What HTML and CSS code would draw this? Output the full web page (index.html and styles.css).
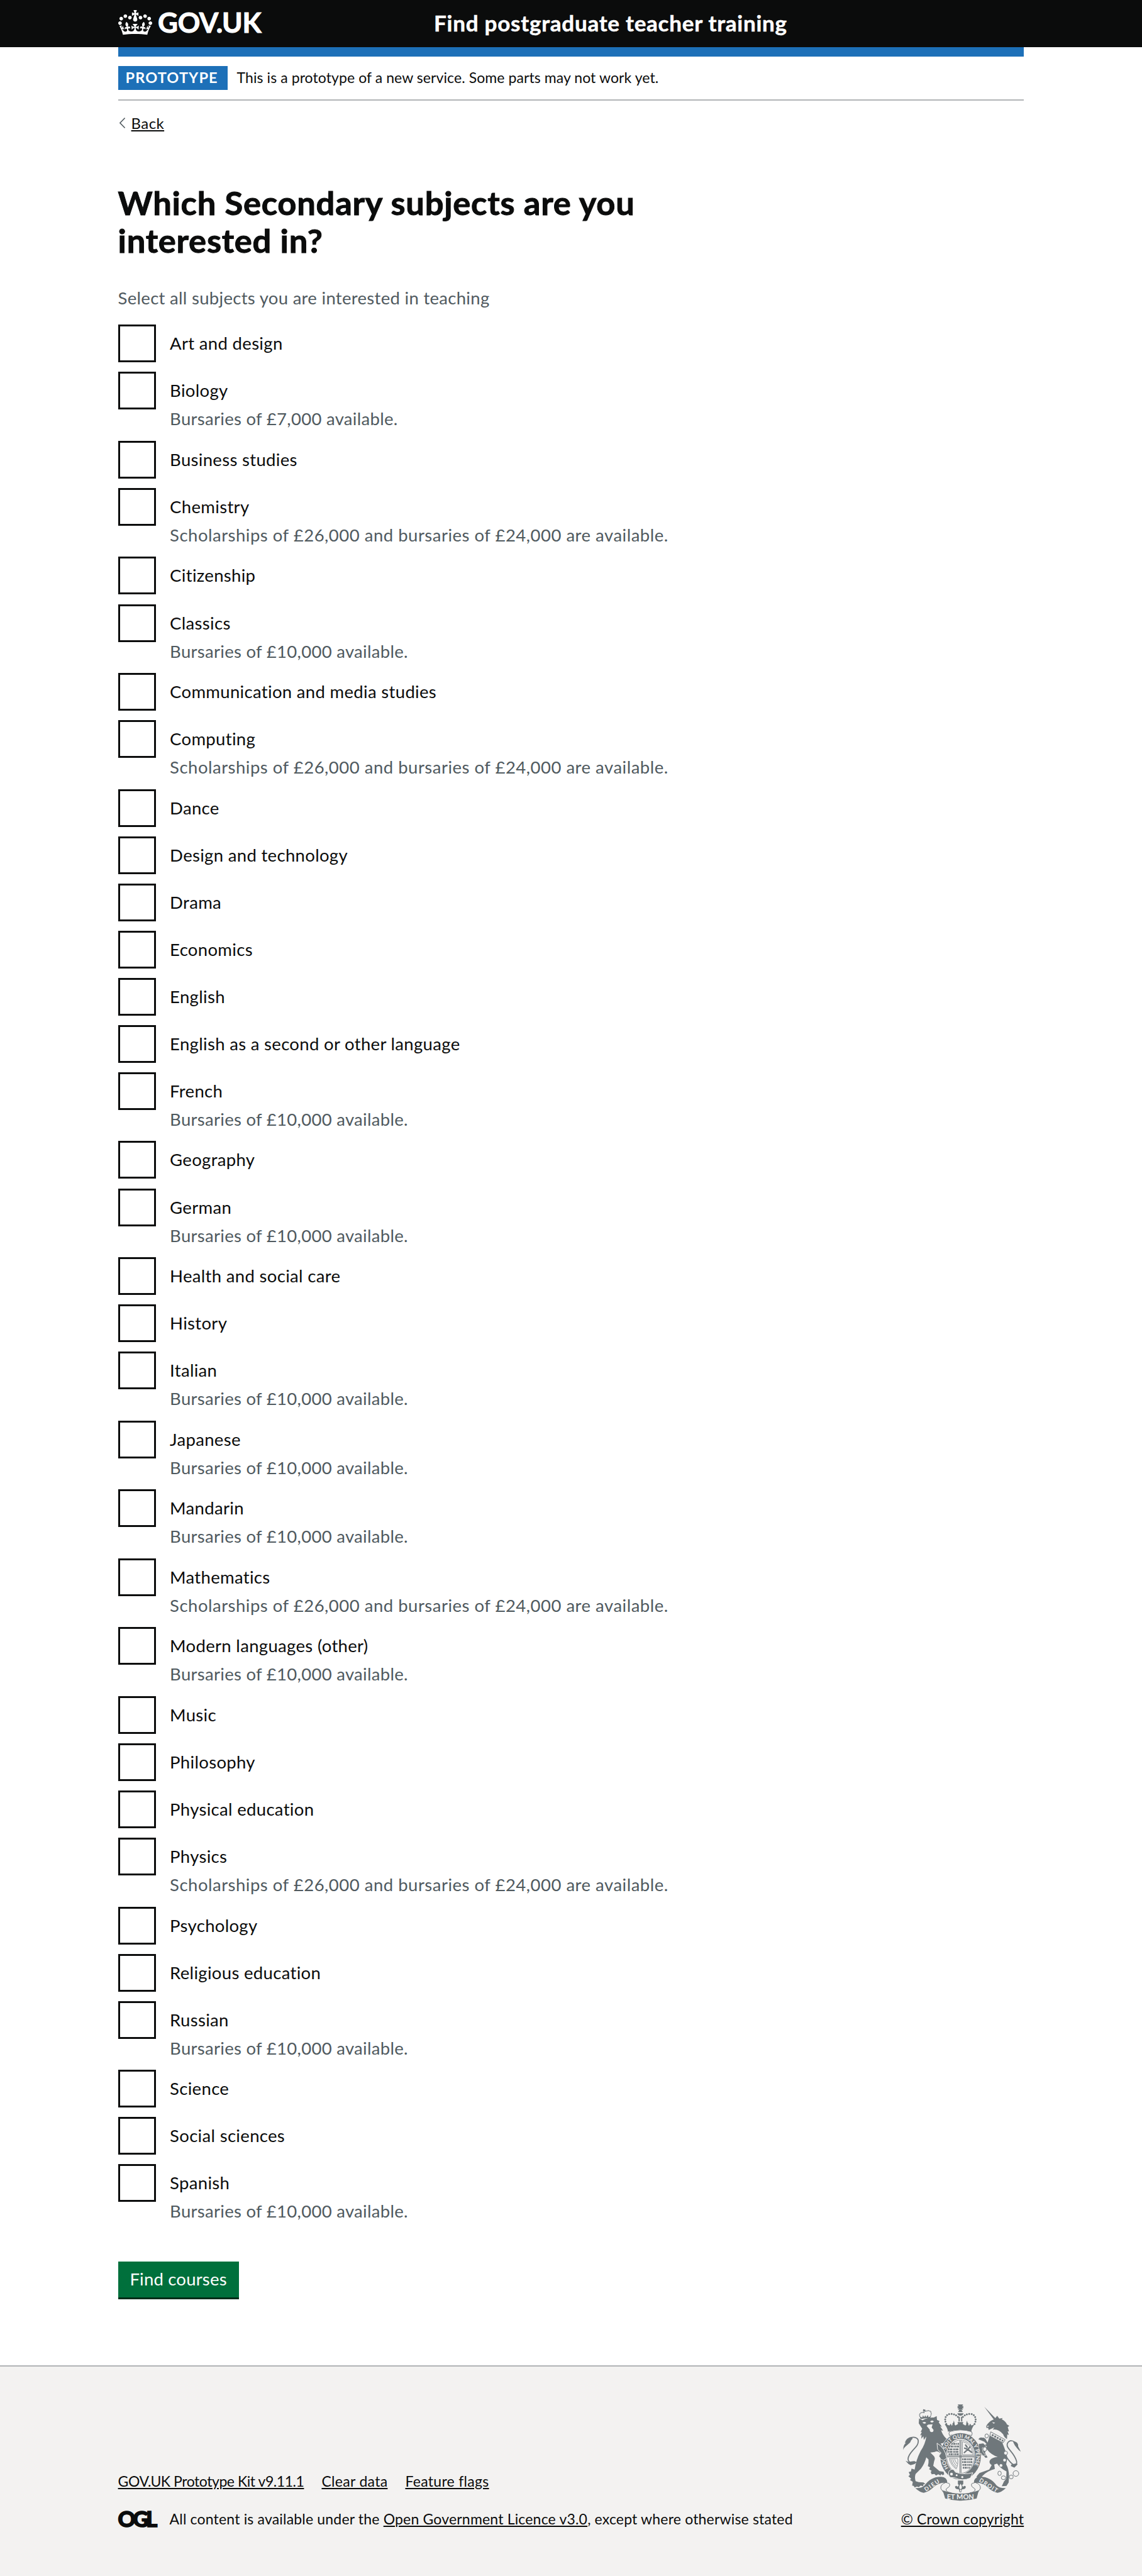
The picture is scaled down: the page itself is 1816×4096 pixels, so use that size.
FILE: index.html
```html
<!DOCTYPE html>
<html lang="en">
<head>
<meta charset="utf-8">
<title>Which Secondary subjects are you interested in? - Find postgraduate teacher training</title>
<link rel="stylesheet" href="styles.css">
</head>
<body>
<header class="header">
  <div class="container header-row">
    <a class="logo" href="#">
      <svg class="logo-crown" viewBox="0 0 132 97" aria-hidden="true"><path fill="currentColor" fill-rule="evenodd" d="M25 30.2c3.5 1.5 7.7-.2 9.1-3.7 1.5-3.6-.2-7.8-3.9-9.2-3.6-1.4-7.6.3-9.1 3.9-1.4 3.5.3 7.5 3.9 9zM9 39.5c3.6 1.5 7.8-.2 9.2-3.7 1.5-3.6-.2-7.8-3.9-9.1-3.6-1.5-7.6.2-9.1 3.8-1.4 3.5.3 7.5 3.8 9zM4.4 57.2c3.5 1.5 7.7-.2 9.1-3.8 1.5-3.6-.2-7.7-3.9-9.1-3.5-1.5-7.6.3-9.1 3.8-1.4 3.5.3 7.6 3.9 9.1zm38.3-21.4c3.5 1.5 7.7-.2 9.1-3.8 1.5-3.6-.2-7.7-3.9-9.1-3.6-1.5-7.6.3-9.1 3.8-1.3 3.6.4 7.7 3.9 9.1zm64.4-5.6c-3.6 1.5-7.8-.2-9.1-3.7-1.5-3.6.2-7.8 3.8-9.2 3.6-1.4 7.7.3 9.2 3.9 1.3 3.5-.4 7.5-3.9 9zm15.9 9.3c-3.6 1.5-7.7-.2-9.1-3.7-1.5-3.6.2-7.8 3.7-9.1 3.6-1.5 7.7.2 9.2 3.8 1.5 3.5-.3 7.5-3.8 9zm4.7 17.7c-3.6 1.5-7.8-.2-9.2-3.8-1.5-3.6.2-7.7 3.9-9.1 3.6-1.5 7.7.3 9.2 3.8 1.3 3.5-.4 7.6-3.9 9.1zM89.3 35.8c-3.6 1.5-7.8-.2-9.2-3.8-1.4-3.6.2-7.7 3.9-9.1 3.6-1.5 7.7.3 9.2 3.8 1.4 3.6-.3 7.7-3.9 9.1zM69.7 17.7l8.9 4.7V9.3l-8.9 2.8c-.2-.3-.5-.6-.9-.9L72.4 0H59.6l3.5 11.2c-.3.3-.6.5-.9.9l-8.8-2.8v13.1l8.8-4.7c.3.3.6.7.9.9l-5 15.4v.1c-.2.8-.4 1.6-.4 2.4 0 4.1 3.1 7.5 7 8.1h.2c.3 0 .7.1 1 .1.4 0 .7 0 1-.1h.2c4-.6 7.1-4.1 7.1-8.1 0-.8-.1-1.7-.4-2.4V34l-5.1-15.4c.4-.2.7-.6 1-.9zM66 92.8c16.9 0 32.8 1.1 47.1 3.2 4-16.9 8.9-26.7 14-33.5l-9.6-3.4c1 4.9 1.1 7.2 0 10.2-1.5-1.4-3-4.3-4.2-8.7L108.6 76c2.8-2 5-3.2 7.5-3.3-4.4 9.4-10 11.9-13.6 11.2-4.3-.8-6.3-4.6-5.6-7.9 1-4.7 5.7-5.9 8-.5 4.3-8.7-3-11.4-7.6-8.8 7.1-7.2 7.9-13.5 2.1-21.1-8 6.1-8.1 12.3-4.5 20.8-4.7-5.4-12.1-2.5-9.5 6.2 3.4-5.2 7.9-2 7.2 3.1-.6 4.3-6.4 7.8-13.5 7.2-10.3-.9-10.9-8-11.2-13.8 2.5-.5 7.1 1.8 11 7.3L80.2 60c-4.1 4.4-8 5.3-12.3 5.4 1.4-4.4 8-11.6 8-11.6H55.5s6.4 7.2 7.9 11.6c-4.2-.1-8-1-12.3-5.4l1.4 16.4c3.9-5.5 8.5-7.7 10.9-7.3-.3 5.8-.9 12.8-11.1 13.8-7.2.6-12.9-2.9-13.5-7.2-.7-5 3.8-8.3 7.1-3.1 2.7-8.7-4.6-11.6-9.4-6.2 3.7-8.5 3.6-14.7-4.6-20.8-5.8 7.6-5 13.9 2.2 21.1-4.7-2.6-11.9.1-7.7 8.8 2.3-5.5 7.1-4.2 8.1.5.7 3.3-1.3 7.1-5.7 7.9-3.5.7-9-1.8-13.5-11.2 2.5.1 4.7 1.3 7.5 3.3l-4.7-15.4c-1.2 4.4-2.7 7.2-4.3 8.7-1.1-3-.9-5.3 0-10.2l-9.5 3.4c5 6.9 9.9 16.7 14 33.5 14.8-2.1 30.8-3.2 47.7-3.2z"/></svg>
      <span class="logo-text">GOV.UK</span>
    </a>
    <a class="service-name" href="#">Find postgraduate teacher training</a>
  </div>
</header>
<div class="container">
  <div class="header-bar"></div>
  <div class="phase-banner">
    <strong class="tag">PROTOTYPE</strong>
    <span class="phase-text">This is a prototype of a new service. Some parts may not work yet.</span>
  </div>
  <div class="back">
    <svg class="back-arrow" viewBox="0 0 9 17" aria-hidden="true"><path d="M8.6.6.9 8.5l7.7 7.9" fill="none" stroke="currentColor" stroke-width="1.5"/></svg>
    <a class="back-link" href="#">Back</a>
  </div>
  <main class="main">
    <h1 class="heading">Which Secondary subjects are you interested in?</h1>
    <p class="hint">Select all subjects you are interested in teaching</p>
    <form>
      <div class="checkboxes">
        <div class="item"><input type="checkbox" class="box" id="s1"><div><label class="label" for="s1">Art and design</label></div></div>
        <div class="item"><input type="checkbox" class="box" id="s2"><div><label class="label" for="s2">Biology</label><p class="award">Bursaries of £7,000 available.</p></div></div>
        <div class="item"><input type="checkbox" class="box" id="s3"><div><label class="label" for="s3">Business studies</label></div></div>
        <div class="item"><input type="checkbox" class="box" id="s4"><div><label class="label" for="s4">Chemistry</label><p class="award scholarship">Scholarships of £26,000 and bursaries of £24,000 are available.</p></div></div>
        <div class="item"><input type="checkbox" class="box" id="s5"><div><label class="label" for="s5">Citizenship</label></div></div>
        <div class="item"><input type="checkbox" class="box" id="s6"><div><label class="label" for="s6">Classics</label><p class="award">Bursaries of £10,000 available.</p></div></div>
        <div class="item"><input type="checkbox" class="box" id="s7"><div><label class="label" for="s7">Communication and media studies</label></div></div>
        <div class="item"><input type="checkbox" class="box" id="s8"><div><label class="label" for="s8">Computing</label><p class="award scholarship">Scholarships of £26,000 and bursaries of £24,000 are available.</p></div></div>
        <div class="item"><input type="checkbox" class="box" id="s9"><div><label class="label" for="s9">Dance</label></div></div>
        <div class="item"><input type="checkbox" class="box" id="s10"><div><label class="label" for="s10">Design and technology</label></div></div>
        <div class="item"><input type="checkbox" class="box" id="s11"><div><label class="label" for="s11">Drama</label></div></div>
        <div class="item"><input type="checkbox" class="box" id="s12"><div><label class="label" for="s12">Economics</label></div></div>
        <div class="item"><input type="checkbox" class="box" id="s13"><div><label class="label" for="s13">English</label></div></div>
        <div class="item"><input type="checkbox" class="box" id="s14"><div><label class="label" for="s14">English as a second or other language</label></div></div>
        <div class="item"><input type="checkbox" class="box" id="s15"><div><label class="label" for="s15">French</label><p class="award">Bursaries of £10,000 available.</p></div></div>
        <div class="item"><input type="checkbox" class="box" id="s16"><div><label class="label" for="s16">Geography</label></div></div>
        <div class="item"><input type="checkbox" class="box" id="s17"><div><label class="label" for="s17">German</label><p class="award">Bursaries of £10,000 available.</p></div></div>
        <div class="item"><input type="checkbox" class="box" id="s18"><div><label class="label" for="s18">Health and social care</label></div></div>
        <div class="item"><input type="checkbox" class="box" id="s19"><div><label class="label" for="s19">History</label></div></div>
        <div class="item"><input type="checkbox" class="box" id="s20"><div><label class="label" for="s20">Italian</label><p class="award">Bursaries of £10,000 available.</p></div></div>
        <div class="item"><input type="checkbox" class="box" id="s21"><div><label class="label" for="s21">Japanese</label><p class="award">Bursaries of £10,000 available.</p></div></div>
        <div class="item"><input type="checkbox" class="box" id="s22"><div><label class="label" for="s22">Mandarin</label><p class="award">Bursaries of £10,000 available.</p></div></div>
        <div class="item"><input type="checkbox" class="box" id="s23"><div><label class="label" for="s23">Mathematics</label><p class="award scholarship">Scholarships of £26,000 and bursaries of £24,000 are available.</p></div></div>
        <div class="item"><input type="checkbox" class="box" id="s24"><div><label class="label" for="s24">Modern languages (other)</label><p class="award">Bursaries of £10,000 available.</p></div></div>
        <div class="item"><input type="checkbox" class="box" id="s25"><div><label class="label" for="s25">Music</label></div></div>
        <div class="item"><input type="checkbox" class="box" id="s26"><div><label class="label" for="s26">Philosophy</label></div></div>
        <div class="item"><input type="checkbox" class="box" id="s27"><div><label class="label" for="s27">Physical education</label></div></div>
        <div class="item"><input type="checkbox" class="box" id="s28"><div><label class="label" for="s28">Physics</label><p class="award scholarship">Scholarships of £26,000 and bursaries of £24,000 are available.</p></div></div>
        <div class="item"><input type="checkbox" class="box" id="s29"><div><label class="label" for="s29">Psychology</label></div></div>
        <div class="item"><input type="checkbox" class="box" id="s30"><div><label class="label" for="s30">Religious education</label></div></div>
        <div class="item"><input type="checkbox" class="box" id="s31"><div><label class="label" for="s31">Russian</label><p class="award">Bursaries of £10,000 available.</p></div></div>
        <div class="item"><input type="checkbox" class="box" id="s32"><div><label class="label" for="s32">Science</label></div></div>
        <div class="item"><input type="checkbox" class="box" id="s33"><div><label class="label" for="s33">Social sciences</label></div></div>
        <div class="item"><input type="checkbox" class="box" id="s34"><div><label class="label" for="s34">Spanish</label><p class="award">Bursaries of £10,000 available.</p></div></div>
      </div>
      <button class="button" type="button">Find courses</button>
    </form>
  </main>
</div>
<footer class="footer">
  <div class="container footer-row">
    <div class="footer-main">
      <nav class="footer-links">
        <a class="kit-link" href="#">GOV.UK Prototype Kit v9.11.1</a>
        <a href="#">Clear data</a>
        <a href="#">Feature flags</a>
      </nav>
      <div class="licence">
        <span class="ogl">OGL</span>
        <span>All content is available under the <a href="#">Open Government Licence v3.0</a>, except where otherwise stated</span>
      </div>
    </div>
    <div class="copyright">
      <svg class="crest" viewBox="102 101 750 615" aria-hidden="true">
        <defs>
          <path id="garter" d="M369 432A99 118 0 0 1 468 314A99 118 0 0 1 567 432A99 118 0 0 1 468 550"/>
          <path id="garter-low" d="M396 513A99 118 0 0 1 369 432"/>
          <path id="pearls" d="M377 226C360 190 376 162 406 162C428 163 442 171 452 182"/>
        </defs>
        <g fill="currentColor">
          <!-- crown -->
          <path d="M450 102h34l-7 13 8-5v18l-8-5 6 12h-32l6-12-8 5v-18l8 5zM452 150l8-14h14l8 14zM447 158h40q-3 14-20 16q-17-2-20-16zM455 180h8v30h-8zM471 180h8v30h-8z"/>
          <path d="M377 228l20 8 8-12 8 14q6-10 3-16 8-2 8-18 6 12 6 18-2 8 5 14l17-10-3-12h36l-3 12 17 10q7-6 5-14 0-6 6-18 0 16 8 18-3 6 3 16l8-14 8 12 20-8q-18 24-21 47-74-22-148 0-3-23-21-47z"/>
          <path d="M398 275q70-22 140 0 8 12 0 25-70-28-140 0-8-13 0-25z" fill="#f3f2f1" stroke="currentColor" stroke-width="4"/>
          <!-- lion -->
          <path d="M202 222l2-31 22 12q32-20 72-18l18-9 2 24 17 8-6 8 20 28-11-3 19 28-13-3q10 30 30 50l6 4-10 16q-10 14-28 14l22 42q14 20 14 42l-12 12-10 8-2-14-14 4 4-16-12-4 8-12q-20-20-36-8l-28 4 20 20q14 14 4 34l-6 30 40 34 26 4 4 16-10 6-8-8-6 10-14-8-14 8-10-10-18 2-6-14 6-8-16-10 6-12-14-8q6-20 4-42l-14-14q-10 40-34 72l-34 34q-8 20 0 46l20 6 30 2 12 10-12 2-2 12-16-4-12 10-12-4-14 6-6-10-10-2 4-24-18-12 8-8-18-16 10-8-8-18 14-4 4-18 20 6q8-60 38-118 30-44 36-92l-16 22-2-24-14 16 2-26-10 6 12-24-8 2 10-22z"/>
          <path d="M225 216q20-8 24 4-14 10-24-4zM274 210q14-12 24 0-12 14-24 0zM252 238l10-8 28-2-6 20 12 16q0 14-12 14-14-2-12-16l-10-12z" fill="#f3f2f1"/>
          <path d="M214 195l-4-16 14 6 5-14 7 12 8-12 6 12 9-14 5 14 14-6-3 12q-32-2-61 6zM231 132l14 4-1 10-5-2-2 14-5-2 1-12-5-2z"/>
          <path d="M103 392q0-34 18-46l-8 0q10-34 44-38l6 12q-12 8-16 24-18 16-30 26-12 10-14 22zM118 460l20 8q20-6 36-6l16 8-18 12-22 6-14-8z"/>
          <!-- unicorn -->
          <path d="M619 117l78 80-14 6zM683 196l18-22 13 18 22-4-6 8q26 14 32 32l16 10-10 8 8 28-9-2 8 24-10-4-2 30q-18-10-24-30-30-36-66-30l10-14-18 8-18 8-4-14-10 2-2-14q20-30 42-38z"/>
          <path d="M654 296l78 46q26 60 34 100l-8 40q18 34 18 74l-2 42-14 22-30 2 14-30 14-18 2-46q-40-20-60-50l-18 6 4 28q-50 14-76 42l-12 14-30-2 6-12 14-16 62-22 16-28q-20-14-12-30 12-20 50-22-44-16-68-48l-8-4q-6 22-2 32l14 22-12 4-16-16-14-2 6-12q-20-22-16-46l22-4 24-8-16-16-10-4-26-10q8-22 44-4l14 24z"/>
        </g>
        <g fill="none" stroke="currentColor">
          <use href="#pearls" stroke-width="12" stroke-linecap="round" stroke-dasharray="0 15"/>
          <use href="#pearls" transform="matrix(-1 0 0 1 934 0)" stroke-width="12" stroke-linecap="round" stroke-dasharray="0 15"/>
          <path stroke-width="7" stroke-linecap="round" stroke-dasharray="0 9" d="M213 186C200 166 210 150 236 152M277 176C288 154 278 132 244 146"/>
          <path stroke-width="7" d="M178 476C138 478 124 456 142 424C164 384 200 370 199 334C197 310 168 306 150 316M760 436C796 492 830 506 824 462C806 400 754 382 766 350C778 326 806 328 820 352"/>
          <path fill="currentColor" stroke="none" d="M806 336q30 4 28 32l17 34q-14-8-24-22l-14-18-10-20zM790 484l36-8 4 8-20 20-22-10z"/>
          <path stroke="#f3f2f1" stroke-width="9" d="M650 290L744 346"/>
          <path fill="#f3f2f1" stroke-width="4" d="M660 276l92 50-14 20-84-44z"/>
          <path stroke-width="12" stroke-dasharray="12 6" d="M667 295l72 39"/>
          <!-- garter and shield -->
          <ellipse cx="468" cy="432" rx="132" ry="152" fill="#f3f2f1" stroke="none"/>
          <ellipse cx="468" cy="432" rx="111" ry="130" stroke-width="36"/>
          <ellipse cx="468" cy="434" rx="88" ry="106" stroke-width="3"/>
          <path stroke-width="4" d="M464 330v210M471 330v210M381 429h176M381 436h176"/>
          <path stroke-width="11" stroke-dasharray="9 3 14 4 6 3" d="M410 352h48M394 369h64M388 387h70M388 403h70M392 418h64M478 450h66M478 468h66M480 486h58M482 504h46"/>
          <path stroke-width="3" d="M396 446h54q4 40-10 66-32-22-44-66zM406 450q6 28 32 54M418 450q4 20 24 44M430 450q4 14 16 30M480 422v-84q56 10 68 84z"/>
          <path stroke-width="9" stroke-linecap="round" d="M492 408l22-20 24 18M494 380l20 8 14-16M500 360l10 14"/>
          <path fill="currentColor" stroke="#f3f2f1" stroke-width="4" d="M318 348q52 30 62 96l-22 14-16-8-12-20 14-20-22-22z"/>
          <path fill="currentColor" stroke="#f3f2f1" stroke-width="4" d="M392 530q14-22 34-12l8 14q50 20 112 4l-16 34q-52 22-100-2l-26-2q-16-12-12-36z"/>
          <path fill="currentColor" stroke="#f3f2f1" stroke-width="3" d="M582 352l30-4 22 22-28 8 4 26 18 22-14 4-18-18-12-2 6-12q-12-24-8-46z"/>
          <!-- chain -->
          <g stroke-width="4"><ellipse cx="634" cy="302" rx="11" ry="13"/><circle cx="613" cy="324" r="9"/><ellipse cx="622" cy="386" rx="12" ry="14" fill="#f3f2f1"/><circle cx="755" cy="411" r="12" fill="#f3f2f1"/><ellipse cx="716" cy="540" rx="11" ry="14"/><ellipse cx="741" cy="568" rx="14" ry="12"/><ellipse cx="790" cy="563" rx="13" ry="12"/><circle cx="820" cy="541" r="18"/></g>
        </g>
        <g fill="#f3f2f1"><circle cx="410" cy="545" r="9"/><circle cx="443" cy="552" r="6"/><circle cx="479" cy="564" r="7"/><circle cx="748" cy="456" r="9"/><circle cx="725" cy="490" r="9"/><path d="M630 228q-2 12 20 10l-10 8zM668 214l20 4-10 6z"/></g>
        <!-- ribbon -->
        <g fill="currentColor">
          <path d="M180 634q40 2 60-18 40-56 104-54 40 2 40 40l-24-2q-30 2-60 24-30 32-66 40-24-2-54-30zM756 634q-40 2-60-18-40-56-104-54-40 2-40 40l24-2q30 2 60 24 30 32 66 40 24-2 54-30z"/>
          <path d="M354 648q114 42 230 0l-14 52q-100 28-200 0z"/>
          <path d="M451 586h34v22l-8 8 8 10q8-10 16-2 2 12-10 16l-14 2-4 18h-12l-4-18-14-2q-12-4-10-16 8-8 16 2l8-10-6-8z"/>
        </g>
        <path d="M468 606q-14 20-4 34h8q10-14-4-34zM464 644h8v12h-8z" fill="#f3f2f1"/>
        <path d="M384 602q22 0 12 22l-20 16q-4 20 34 24M370 600q-30 10-28 36l16 24M552 602q-22 0-12 22l20 16q4 20-34 24M566 600q30 10 28 36l-16 24" fill="none" stroke="currentColor" stroke-width="4"/>
        <g class="motto">
          <text font-size="33"><textPath href="#garter" startOffset="42">SOIT QUI MAL Y PENSE</textPath></text>
          <text font-size="33"><textPath href="#garter-low" startOffset="8">HO</textPath></text>
          <text font-size="36" transform="translate(248 656) rotate(-34)" textLength="106">DIEU</text>
          <text font-size="36" transform="translate(583 590) rotate(33)" textLength="132">DROIT</text>
          <text font-size="44" x="381" y="704" textLength="172">ET MON</text>
        </g>
      </svg>
      <a class="copyright-link" href="#">© Crown copyright</a>
    </div>
  </div>
</footer>
</body>
</html>
```
FILE: styles.css
```css
* { box-sizing: border-box; }

body {
  margin: 0;
  min-height: 4096px;
  display: flex;
  flex-direction: column;
  background: #fff;
  color: #0b0c0c;
  font-family: Lato, "Liberation Sans", sans-serif;
}

a {
  color: inherit;
  text-decoration-thickness: 1.5px;
  text-underline-offset: 2px;
}

.container {
  width: 1440.6px;
  margin: 0 auto 0 187.6px;
}

.header {
  height: 75px;
  background: #0b0c0c;
  color: #fff;
}

.header-row { display: flex; height: 75px; }

.header a { text-decoration: none; }

.logo {
  display: flex;
  flex: 0 0 502.5px;
}

.logo-crown {
  width: 54px;
  height: 39.7px;
  margin: 16px 9.5px 0 0;
}

.logo-text {
  font-size: 44px;
  line-height: 71px;
  font-weight: 700;
  letter-spacing: -0.4px;
  -webkit-text-stroke: 1px currentColor;
}

.service-name {
  font-size: 35px;
  line-height: 72px;
  font-weight: 700;
  letter-spacing: 0.75px;
  -webkit-text-stroke: 0.5px currentColor;
}

.header-bar { height: 15px; background: #1d70b8; }

.phase-banner {
  display: flex;
  gap: 15px;
  padding: 15px 0;
  border-bottom: 2px solid #b1b4b6;
}

.tag {
  width: 174px;
  height: 37.5px;
  padding-left: 12px;
  background: #1d70b8;
  color: #fff;
  font-size: 23.5px;
  line-height: 36px;
  letter-spacing: 1.1px;
}

.phase-text {
  font-size: 23px;
  line-height: 36px;
  letter-spacing: 0.08px;
}

.back {
  display: flex;
  align-items: center;
  height: 36px;
  margin-top: 18px;
  padding-left: 2px;
}

.back-arrow { width: 9px; height: 17px; color: #505a5f; }

.back-link {
  margin-left: 10px;
  font-size: 24px;
  line-height: 36px;
  letter-spacing: 0.4px;
}

.main { padding-top: 78.6px; }

.heading {
  width: 960px;
  margin: 0 0 43px;
  font-size: 52.5px;
  line-height: 60px;
  font-weight: 700;
  letter-spacing: 0.75px;
  -webkit-text-stroke: 1px currentColor;
}

.hint,
.award {
  margin: 0;
  color: #505a5f;
  font-size: 27.5px;
  line-height: 37.5px;
  letter-spacing: 0.3px;
}

.hint { margin-bottom: 23.7px; }

.checkboxes {
  display: flex;
  flex-direction: column;
  gap: 15.05px;
}

.item { display: flex; gap: 22.5px; }

.box {
  appearance: none;
  flex: none;
  width: 60px;
  height: 60px;
  margin: 0;
  border: 3px solid #0b0c0c;
  border-radius: 0;
  background: #fff;
}

.label {
  display: block;
  font-size: 27.5px;
  line-height: 60px;
  letter-spacing: 0.32px;
}

.award {
  margin-top: -4px;
  padding-bottom: 1px;
}

.scholarship { letter-spacing: 0.5px; }

.button {
  display: block;
  width: 192px;
  height: 57px;
  margin: 60px 0 0;
  padding: 0 0 1px;
  border: 0;
  background: #00703c;
  box-shadow: 0 3px 0 #002d18;
  color: #fff;
  font-family: inherit;
  font-size: 27.5px;
  letter-spacing: 0.2px;
}

.footer {
  flex: 1;
  margin-top: 108px;
  padding-top: 60px;
  border-top: 2px solid #b1b4b6;
  background: #f3f2f1;
  font-size: 23px;
  line-height: 30px;
  letter-spacing: 0.18px;
}

.footer-row {
  display: flex;
  justify-content: space-between;
  align-items: flex-end;
}

.footer-links { display: flex; gap: 28px; margin-bottom: 30px; letter-spacing: 0.3px; }

.kit-link { letter-spacing: -0.45px; }

.licence { display: flex; gap: 20.5px; }

.ogl {
  width: 61.5px;
  font-size: 34.5px;
  font-weight: 900;
  letter-spacing: -4.2px;
  -webkit-text-stroke: 1.6px currentColor;
}

.copyright {
  display: flex;
  flex-direction: column;
  align-items: flex-end;
}

.copyright-link { letter-spacing: 0.15px; }

.crest {
  width: 187.5px;
  height: 153.75px;
  margin: 0 4.5px 13px 0;
  color: #6f777b;
}

.motto {
  fill: #f3f2f1;
  font-family: Lato, "Liberation Sans", sans-serif;
  font-weight: 700;
  letter-spacing: 0;
}
```
